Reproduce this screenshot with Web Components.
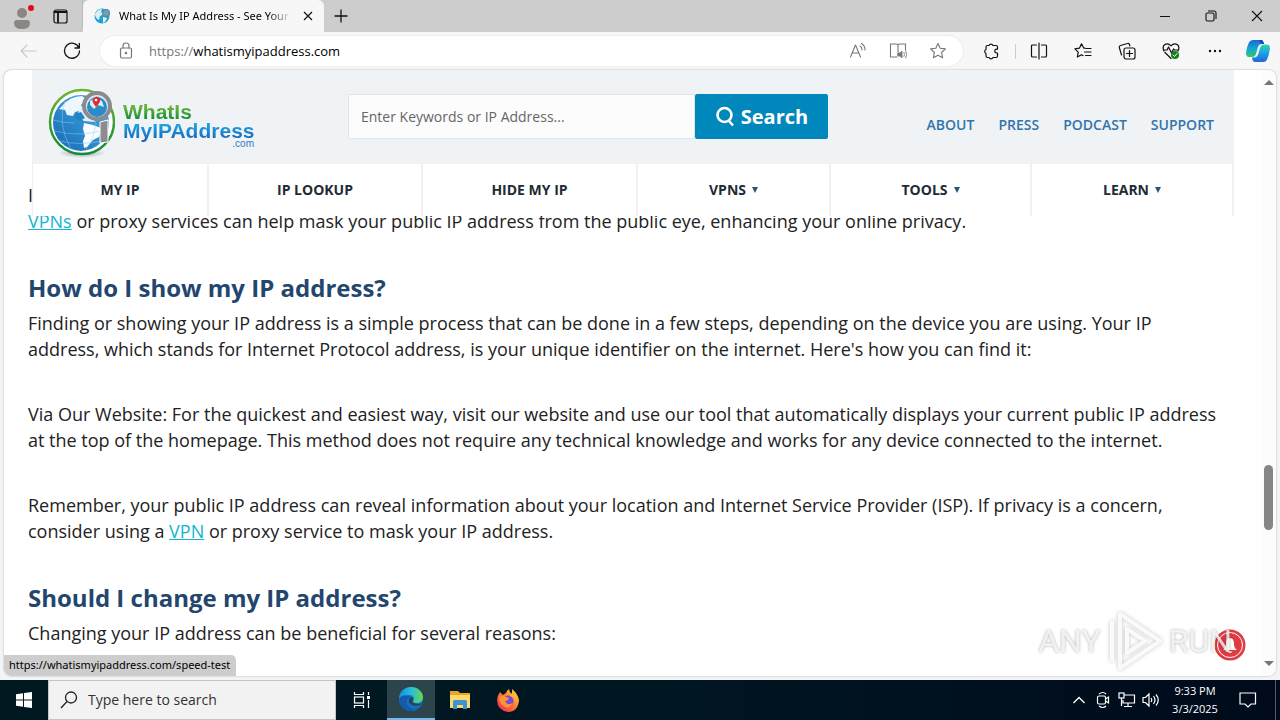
<!DOCTYPE html>
<html lang="en">
<head>
<meta charset="utf-8">
<title>What Is My IP Address - See Your Public Address</title>
<style>
html,body{margin:0;height:100%;overflow:hidden}
body{font-family:"Open Sans","Noto Sans",sans-serif;background:#f7f7f7;color:#222}
</style>
</head>
<body>
<desktop-screen>
  <tab-strip slot="tabs"><span>What Is My IP Address - See Your Public Address</span></tab-strip>
  <browser-toolbar slot="toolbar"></browser-toolbar>
  <page-view slot="page">
    <site-header slot="header">
      <nav-item slot="nav">MY IP</nav-item>
      <nav-item slot="nav">IP LOOKUP</nav-item>
      <nav-item slot="nav">HIDE MY IP</nav-item>
      <nav-item slot="nav" menu>VPNS</nav-item>
      <nav-item slot="nav" menu>TOOLS</nav-item>
      <nav-item slot="nav" menu>LEARN</nav-item>
    </site-header>
    <faq-article></faq-article>
  </page-view>
  <task-bar slot="taskbar"></task-bar>
</desktop-screen>

<script>
const define = (name, css, html, setup) => {
  const tpl = document.createElement('template');
  tpl.innerHTML = `<style>*{box-sizing:border-box}button{font:inherit;color:inherit;background:none;border:0;padding:0;margin:0}svg{display:block;flex:none}${css}</style>${html}`;
  customElements.define(name, class extends HTMLElement {
    connectedCallback() {
      if (this.shadowRoot) return;
      this.attachShadow({mode: 'open'}).append(tpl.content.cloneNode(true));
      if (setup) setup(this);
    }
  });
};

define('desktop-screen', `
:host{display:flex;flex-direction:column;height:100vh}
.page{flex:1;min-height:0;display:flex}
::slotted([slot=page]){flex:1;min-width:0}`,
`<slot name="tabs"></slot><slot name="toolbar"></slot><div class="page"><slot name="page"></slot></div><slot name="taskbar"></slot>`);

define('tab-strip', `
:host{display:flex;height:32px;background:#cdcdcd;color:#1b1b1b}
.left{display:flex;align-items:center;width:83px;padding-left:12px;gap:17px;border-right:1px solid #b9b9b9;border-radius:0 0 6px 0}
.tab{display:flex;align-items:center;width:241px;padding:0 8px 0 11px;background:#f7f7f7;border-radius:6px 6px 0 0}
.title{flex:1;min-width:0;margin:0 6px 0 9px;font:11px/16px "Noto Sans",sans-serif;white-space:nowrap;overflow:hidden;color:#000;-webkit-mask:linear-gradient(90deg,#000 85%,transparent 99%);mask:linear-gradient(90deg,#000 85%,transparent 99%)}
.new{width:34px;display:grid;place-items:center}
.win{margin-left:auto;display:flex}
.win button{width:46px;display:grid;place-items:center}`,
`<div class="left">
<button aria-label="Profile"><svg width="24" height="26" viewBox="0 0 24 26"><circle cx="10" cy="10" r="5" fill="#8c8683"/><path d="M2 20q0-3 3-3h10q3 0 3 3 0 6-8 6t-8-6Z" fill="#8c8683"/><circle cx="19" cy="5" r="3" fill="#e00b1c"/></svg></button>
<button aria-label="Tab actions"><svg width="15" height="15" fill="none" stroke="#111" stroke-width="1.2"><rect x="1" y="1" width="13" height="13" rx="2"/><path d="M1 3h13M5 4v10" stroke-width="1.8"/></svg></button></div>
<div class="tab"><svg width="16" height="16"><circle cx="8" cy="8" r="7.5" fill="#259ed2"/><path d="M1 6q3-5 7-5l-1 3 3 2-4 2-1 4Q1 10 1 6Z" fill="#d9eef6"/><path d="M9 9l4 1-2 4-2 1Z" fill="#e3f3f8"/><circle cx="12" cy="5" r="3.4" fill="#58a9cc" stroke="#75838c" stroke-width="1.3"/></svg><div class="title"><slot></slot></div>
<button aria-label="Close tab"><svg width="16" height="16"><path d="M4 4l8 8M12 4l-8 8" stroke="#111" stroke-width="1.2"/></svg></button></div>
<button class="new" aria-label="New tab"><svg width="14" height="14"><path d="M7 .5v13M.5 7h13" stroke="#111" stroke-width="1.3"/></svg></button>
<div class="win"><button aria-label="Minimize"><svg width="12" height="12"><path d="M1 6.5h10" stroke="#111"/></svg></button>
<button aria-label="Restore"><svg width="12" height="12" fill="none" stroke="#111" stroke-width="1.1"><rect x="1" y="3" width="8" height="8" rx="1.5"/><path d="M3 1h6q2 0 2 2v6"/></svg></button>
<button aria-label="Close"><svg width="12" height="12"><path d="M1 1l10 10M11 1L1 11" stroke="#111" stroke-width="1.1"/></svg></button></div>`);

define('browser-toolbar', `
:host{display:flex;align-items:center;height:38px;background:#f7f7f7;color:#111}
button{display:grid;place-items:center;width:44px;height:30px}
.back{margin-left:6px}
.address{flex:1;display:flex;align-items:center;height:30px;margin-left:6px;padding:0 5px 0 16px;border-radius:15px;background:#fff;box-shadow:0 0 2px #0002}
.address button{width:40px;color:#777}
.url{flex:1;margin-left:13px;font-size:13px;line-height:20px;white-space:nowrap;color:#000}
.url i{font-style:normal;color:#777}
.sep{width:1px;height:15px;margin:0 1px 0 2px;background:#ccc}
.tools{display:flex;align-items:center;padding-left:6px}
.tools .copilot{width:36px;margin-right:4px;margin-left:3px}
svg{fill:none;stroke:currentColor;stroke-width:1.2;stroke-linejoin:round;stroke-linecap:round}`,
`<button class="back" aria-label="Back"><svg width="18" height="16" style="color:#c9c9c9"><path d="M17 8H2M8 2L2 8l6 6"/></svg></button>
<button aria-label="Refresh"><svg width="18" height="18"><path d="M16 6A7.5 7.500 0 1 0 16.500 9M16.300 1.500V6H12" stroke-width="1.3"/></svg></button>
<div class="address"><svg width="20" height="18" style="color:#777"><rect x="4.500" y="6" width="11" height="10" rx="1.500"/><path d="M7 6V4q0-3 3-3t3 3v2"/><circle cx="10" cy="11" r=".6" fill="#777"/></svg>
<div class="url" role="textbox" aria-label="Address"><i>https://</i>whatismyipaddress.com</div>
<button aria-label="Read aloud"><svg width="18" height="18"><path d="M1.500 15L6.500 3l5 12M3.200 11h6.600M11 4q2 1 2 4M12.500 1.500Q16 3.500 16 8" stroke-width="1.1"/></svg></button>
<button aria-label="Immersive reader"><svg width="18" height="18"><path d="M8 15H1.500V2H7q1.500 0 2 1 .5-1 2-1h5.500v6M9 3v7" stroke-width="1.1"/><path d="M9 11h2l2-2v7l-2-2H9Z" fill="currentColor" stroke-width=".8"/><path d="M15 10.500q1 2 0 4M16.800 9q2 3.500 0 7" stroke-width=".9"/></svg></button>
<button aria-label="Add to favorites"><svg width="18" height="18"><path d="M9 1.500l2.200 4.700 5.200.7-3.800 3.600 1 5.200L9 13.200l-4.600 2.500 1-5.200L1.600 6.900l5.200-.7Z" stroke-width="1.1"/></svg></button></div>
<div class="tools"><button aria-label="Extensions"><svg width="18" height="18"><path d="M5.500 3.500H7a2.200 2.200 0 0 1 4 0h3q1.500 0 1.500 1.500v2.200h-.8a1.900 1.900 0 0 0 0 3.800h.8V14q0 1.500-1.500 1.500h-3a2.200 2.200 0 0 1-4 0H5.500Q4 15.500 4 14v-2.500a2.200 2.200 0 0 1 0-4V5q0-1.500 1.500-1.500Z"/></svg></button><span class="sep"></span>
<button aria-label="Split screen"><svg width="18" height="18"><path d="M6.500 3h-4q-1 0-1 1v10q0 1 1 1h4M11.500 3h4q1 0 1 1v10q0 1-1 1h-4M9 1v16"/></svg></button>
<button aria-label="Favorites"><svg width="18" height="18"><path d="M11 6.200l-1.300-.1L7.500 1.800 5.400 6.200.9 6.900l3.300 3.300-.8 4.800 4-2.200 1.600.8M12 6.500h5M10.500 10H17M11.500 13.500H17"/></svg></button>
<button aria-label="Collections"><svg width="18" height="18"><rect x="6" y="6" width="11" height="11" rx="2"/><path d="M11.500 8.500v6M8.500 11.500h6M3.500 13L1.300 5.500Q1 4 2.500 3.500l7-2q1.500-.5 2 1l.3 1.300"/></svg></button>
<button aria-label="Browser essentials"><svg width="18" height="18"><path d="M2 9Q0 5 2.500 2.800 6 .5 9 3.800q3-3.300 6.500-1Q18 5 16 9M1.500 8H5l1.500-3 3 6 2-4 1 1h4M3 10.500l6 6"/><circle cx="13" cy="13" r="4" fill="#16811a" stroke="none"/><path d="M11 13l1.500 1.500 2.500-3" stroke="#fff" stroke-width="1"/></svg></button>
<button aria-label="More"><svg width="16" height="4"><g fill="#111" stroke="none"><circle cx="3" cy="2" r="1.200"/><circle cx="8" cy="2" r="1.200"/><circle cx="13" cy="2" r="1.200"/></g></svg></button>
<button class="copilot" aria-label="Copilot"><svg width="24" height="24" style="stroke:none"><defs><linearGradient id="a" x2="0" y2="1"><stop stop-color="#1a68d8"/><stop offset=".5" stop-color="#14a6d4"/><stop offset="1" stop-color="#31c96b"/></linearGradient><linearGradient id="b" x2="0" y2="1"><stop stop-color="#35d5aa"/><stop offset=".5" stop-color="#1aa2e8"/><stop offset="1" stop-color="#2465d9"/></linearGradient></defs><path d="M7 1h8q2 0 2.500 2l.5 2h-2q-3 0-4 3l-2 7q-1 3-4 3H3q-3 0-3-4Q1 7 3 3.500 4 1 7 1Z" fill="url(#a)"/><path d="M17 23H9q-2 0-2.500-2L6 18.500h2q3 0 4-3L14 9q1-3.500 4-3.500h3q3 0 3 4-1 7-3 11-1 2.500-4 2.500Z" fill="url(#b)"/><path d="M13 1h2q2 0 3 4h-2q-2-1-3-4Z" fill="#1446b8"/></svg></button></div>`);

define('page-view', `
:host{display:flex;padding:0 4px 4px;background:#f3f4f6}
.frame{position:relative;flex:1;min-width:0;display:flex;background:#fff;border-radius:8px;overflow:hidden;box-shadow:0 0 2px #0005}
.content{position:relative;flex:1;min-width:0;overflow:hidden}
.over{position:absolute;top:0;left:28px;right:27px}
.scroll{display:flex;flex-direction:column;align-items:center;width:15px;padding:10px 0;background:#fcfcfc}
.track{flex:1;width:9px;display:flex;flex-direction:column;padding:6px 0}
.track b{width:9px;height:65px;border-radius:5px;background:#858585}
.track:before{content:"";flex:376}.track:after{content:"";flex:126}
.status{position:absolute;left:0;bottom:0;height:21px;padding:0 6px 0 5px;background:#cdcdcd;color:#000;border-radius:0 5px 0 0;font:11px/20px "Noto Sans",sans-serif}
.bell{position:absolute;right:30px;bottom:15px;width:32px;height:32px}
.mark{position:absolute;right:44px;bottom:3px;display:flex;align-items:center;height:64px;gap:5px;color:#fffc;font:32px/64px Roboto,sans-serif;text-shadow:0 0 3px #0005;pointer-events:none}
.mark svg{filter:drop-shadow(0 0 2px #0004)}`,
`<div class="frame"><div class="content"><slot></slot><div class="over"><slot name="header"></slot></div></div>
<div class="scroll"><svg width="10" height="5"><path d="M5 0l5 5H0Z" fill="#777"/></svg><div class="track"><b></b></div><svg width="10" height="5"><path d="M5 5l5-5H0Z" fill="#777"/></svg></div>
<div class="status">https://whatismyipaddress.com/speed-test</div>
<button class="bell" aria-label="Notifications"><svg width="32" height="32"><circle cx="16" cy="16" r="15.500" fill="#df3b43"/><circle cx="16" cy="16" r="12.500" fill="none" stroke="#fff"/><path d="M9 21q3-2 3-6 0-6 4-6t4 6q0 4 3 6ZM13.500 22.500h5q-2.500 3-5 0Z" fill="#fff"/></svg></button>
<div class="mark"><span>ANY</span><svg width="58" height="64" fill="none" stroke="#fff" stroke-opacity=".85" stroke-linejoin="round"><path d="M14 5l40 27-40 27Z" stroke-width="4"/><path d="M21 20l18 12-18 12Z" stroke-width="4"/><path d="M6 12v40" stroke-width="4"/></svg><span>RUN</span></div></div>`);

define('site-header', `
:host{display:block}
.top{display:flex;height:94px;background:#eff3f6;padding:0 20px 0 16px}
.logo{display:flex;text-decoration:none;width:300px;padding-top:18px;font-family:"Liberation Sans",sans-serif;font-weight:700}
.name{display:flex;flex-direction:column;width:131px;margin-left:8px;padding-top:15px}
.name span{font-size:21px;line-height:18px;color:#43a53b;background:linear-gradient(#66b538 20%,#1b8d3c 90%);-webkit-background-clip:text;background-clip:text;-webkit-text-fill-color:transparent}
.name span+span{line-height:20px;padding-bottom:2px;background-image:linear-gradient(#1d9fe0 20%,#1d62b5 90%)}
.name small{align-self:flex-end;font-size:10px;line-height:10px;margin-top:-4px;font-weight:400;color:#2a7fc6}
form{display:flex;height:45px;margin-top:24px;width:480px}
input{flex:1;min-width:0;height:45px;padding:0 12px;border:1px solid #e0e5e9;background:#fcfcfc;font:14px/20px "Open Sans",sans-serif;border-radius:2px 0 0 2px}
input::placeholder{color:#666;opacity:1}
form button{display:flex;align-items:center;justify-content:center;gap:6px;width:133px;border-radius:2px;background:#0088bd;color:#fff;font-weight:700;font-size:20px}
.links{display:flex;gap:24px;margin-left:auto;padding-top:45px;font-size:14px;line-height:20px}
.links a{color:#3374aa;text-decoration:none;font-weight:600}
nav{display:grid;grid-template-columns:176fr 214fr 215fr 193fr 201fr 202fr;height:52px;background:#fff;border-left:1px solid #efefef}`,
`<header><div class="top"><a class="logo" href="#" aria-label="WhatIsMyIPAddress.com home">
<svg width="67" height="70" viewBox="0 0 67 70"><defs><linearGradient id="r" x2="0" y2="1"><stop stop-color="#6fb62c"/><stop offset="1" stop-color="#118a3a"/></linearGradient><linearGradient id="g" x1="1" x2="0" y2="1"><stop stop-color="#49b4e6"/><stop offset="1" stop-color="#1668b5"/></linearGradient><radialGradient id="s"><stop stop-color="#0005"/><stop offset="1" stop-color="#0000"/></radialGradient></defs>
<ellipse cx="34" cy="65" rx="24" ry="5" fill="url(#s)"/><circle cx="34" cy="34" r="32" fill="#fff" stroke="url(#r)" stroke-width="2.500"/><circle cx="33" cy="35" r="28" fill="url(#g)"/>
<path d="M14 18Q22 8 34 8l4 3-5 6 2 5-8 2-2 4-6-1-2-5-6-1Z" fill="#eef7fb"/><path d="M36 35l9 2 8 3-2 9-6 3-6 7-3 1-1-7 2-5-2-7Z" fill="#fafdff"/><path d="M33 18l8 4 6 12-11-1-7-5Z" fill="#e2f0f8"/><path d="M27 26l6-2 4 6-5 3-5-3Z" fill="#2284c6"/><g fill="none" stroke="#90cae9" stroke-width=".5"><path d="M6 43q27 7 53-2M12 53q20 5 42 0M17 12q-8 25 6 49M43 11q12 26-5 51M5 32q10 3 22 3"/></g>
<path d="M52 34l8-2v22l-8 1Z" fill="#8e8b8c" stroke="#fff"/><circle cx="49" cy="18" r="13" fill="#d6e9f4" stroke="#8b8b8e" stroke-width="4"/><circle cx="49" cy="19" r="10" fill="#2a8bc6"/><path d="M42 13q5-4 12 0l2 6-6-2-4 4-4-4Z" fill="#dceef8"/><path d="M48 19q-5-6-3-8 4-5 7 0 1 3-4 8Z" fill="#dc2e32"/><circle cx="48" cy="12" r="1.300" fill="#fff"/></svg>
<div class="name"><span>WhatIs</span><span>MyIPAddress</span><small>.com</small></div></a>
<form onsubmit="return false"><input type="text" aria-label="Enter Keywords or IP Address" placeholder="Enter Keywords or IP Address..."><button type="submit"><svg width="20" height="22" fill="none" stroke="#fff" stroke-width="2.600"><circle cx="9.500" cy="9" r="7"/><path d="M13.500 14.500l4.500 5"/></svg>Search</button></form>
<div class="links"><a href="#">ABOUT</a><a href="#">PRESS</a><a href="#">PODCAST</a><a href="#">SUPPORT</a></div></div>
<nav><slot name="nav"></slot></nav></header>`);

define('nav-item', `
:host{display:flex;justify-content:center;border-right:2px solid #f1f1f2}
a{display:flex;align-items:center;gap:6px;color:#212b36;text-decoration:none;font-size:14px;font-weight:700;line-height:20px}
svg{display:none}
:host([menu]) svg{display:block}`,
`<a href="#"><span><slot></slot></span><svg width="6" height="6"><path d="M0 0h6L3 6Z" fill="#285575"/></svg></a>`);

define('faq-article', `
:host{display:block;padding:112px 36px 0 24px;font-size:18px;line-height:26px;color:#222}
p{margin:0 0 39px}
h2{margin:0 0 5px;color:#23466e;font-size:24px;line-height:34px;font-weight:700}
section{margin-bottom:37px}
section p:last-child{margin:0}
a{color:#10b5d0;text-decoration:underline}`,
`<article>
<section><p>I<br><a href="#">VPNs</a> or proxy services can help mask your public IP address from the public eye, enhancing your online privacy.</p></section>
<section><h2>How do I show my IP address?</h2>
<p>Finding or showing your IP address is a simple process that can be done in a few steps, depending on the device you are using. Your IP address, which stands for Internet Protocol address, is your unique identifier on the internet. Here's how you can find it:</p>
<p>Via Our Website: For the quickest and easiest way, visit our website and use our tool that automatically displays your current public IP address at the top of the homepage. This method does not require any technical knowledge and works for any device connected to the internet.</p>
<p>Remember, your public IP address can reveal information about your location and Internet Service Provider (ISP). If privacy is a concern, consider using a <a href="#">VPN</a> or proxy service to mask your IP address.</p></section>
<section><h2>Should I change my IP address?</h2><p>Changing your IP address can be beneficial for several reasons:</p></section>
</article>`);

define('task-bar', `
:host{display:flex;height:40px;background:linear-gradient(90deg,#001820,#001722 50%,#000a1a);color:#fff}
button{width:48px;height:40px;display:grid;place-items:center}
label{display:flex;align-items:center;gap:10px;width:288px;padding:0 11px;background:#f2f2f2;border:1px solid #c3c6c8;color:#222}
input{flex:1;min-width:0;border:0;background:none;padding:0;font:14px/20px "Open Sans",sans-serif}
input::placeholder{color:#333;opacity:1}
.view{width:51px}
.on{background:#2c444c;border-bottom:2px solid #76b9ed;margin-right:1px}
.tray{display:flex;align-items:center;margin-left:auto}
.tray button{width:24px}
.clock{width:64px;text-align:center;font-size:11px;line-height:18px;white-space:nowrap}
.tray .note{width:41px}
.end{align-self:stretch;width:5px;margin-left:7px;border-left:1px solid #515b67}`,
`<button aria-label="Start"><svg width="16" height="16" fill="#fff"><path d="M0 2.200L7 1.200V7.500H0ZM8 1.100L16 0V7.500H8ZM0 8.500H7V14.800L0 13.800ZM8 8.500H16V16L8 14.900Z"/></svg></button>
<label><svg width="18" height="18" fill="none" stroke="#222" stroke-width="1.300"><circle cx="11" cy="6.500" r="5.500"/><path d="M7 10.500L1 17"/></svg><input type="text" placeholder="Type here to search" aria-label="Type here to search"></label>
<button class="view" aria-label="Task view"><svg width="18" height="16" fill="none" stroke="#fff" stroke-width="1.200"><path d="M1.500 0v2.500h9V0M1.500 16v-2.500h9V16M15.500 0v3M15.500 8v8"/><rect x="1.500" y="5" width="9" height="6"/><path d="M14 5.500h3" stroke-width="3"/></svg></button>
<button class="on" aria-label="Microsoft Edge"><svg width="24" height="24"><defs><linearGradient id="e" x2="1"><stop stop-color="#168de0"/><stop offset=".5" stop-color="#27bedb"/><stop offset="1" stop-color="#67d84b"/></linearGradient></defs><circle cx="12" cy="12" r="12" fill="#1471c9"/><path d="M.1 12C0 5 5 0 12 0s12 5 12 10c0 4-3 6-6.500 6-3 0-4.500-1.500-3-3 1-2 0-5-4-5C5 8 1 9 .1 12Z" fill="url(#e)"/><path d="M8 12q-2 6 4 9 5 2 9-2-5 5-11 5Q1 22 0 12 4 7 9 9q2 0 4 3-2-2-5 0Z" fill="#135bab"/><path d="M10 12q-1 5 4 6.500 4 1 8-1l1-1.500q-3 1.500-7 .5-4-1-1.500-4Q14 9 10 12Z" fill="#2c444c"/></svg></button>
<button aria-label="File Explorer"><svg width="22" height="20"><path d="M1 1h8l2 2h10v15H1Z" fill="#e3a52c"/><path d="M1 5h20v13H1Z" fill="#ffd86b"/><path d="M4 19v-7q0-2 2-2h10q2 0 2 2v7h-4v-4H8v4Z" fill="#3994d4"/></svg></button>
<button aria-label="Firefox"><svg width="24" height="24"><defs><linearGradient id="f" x1="1" x2="0" y2="1"><stop stop-color="#ffe43f"/><stop offset=".5" stop-color="#ff7630"/><stop offset="1" stop-color="#ee176a"/></linearGradient></defs><path d="M4 4l3 3 3-2q1-3 3-4 0 3 3 5V1q6 5 7 11-1 12-11 12Q1 22 1 12q0-4 3-8Z" fill="url(#f)"/><circle cx="12" cy="13" r="5.500" fill="#794ad2"/><path d="M3 9q4-3 7 0l3 1q-1 3-4 3 2 5 8 2-4 7-10 3-4-3-4-9Z" fill="#ff9435"/><path d="M14 8q4 1 5 5 2-6-3-8Z" fill="#ffb631"/></svg></button>
<div class="tray"><button aria-label="Show hidden icons"><svg width="12" height="8" fill="none" stroke="#fff" stroke-width="1.300"><path d="M.5 7L6 1.500 11.500 7"/></svg></button>
<button aria-label="Meet now"><svg width="14" height="18" fill="none" stroke="#fff" stroke-width="1.200"><rect x="1.500" y="5" width="8" height="8" rx="1.500"/><path d="M9.500 8l3-2v6l-3-2M3 3q4-3 7 0M3 15q4 3 7 0"/></svg></button>
<button aria-label="Network"><svg width="18" height="16" fill="none" stroke="#fff" stroke-width="1.200"><path d="M6 3h10.500v8H5V8M10 11v3M6 14.500h8M3.500 6v8"/><rect x="1" y="1" width="5" height="5"/></svg></button>
<button aria-label="Volume"><svg width="18" height="16" fill="none" stroke="#fff" stroke-width="1.200"><path d="M1 5.500h2.500L7 2v12L3.500 10.500H1ZM9 6q1.500 2 0 4M11.500 4q3 4 0 8M14 2.500q4.500 5.500 0 11"/></svg></button>
<div class="clock">9:33 PM<br>3/3/2025</div>
<button class="note" aria-label="Action center"><svg width="18" height="18" fill="none" stroke="#fff" stroke-width="1.200"><path d="M1 2h15.500v11H12l-3 3-3-3H1Z"/></svg></button><span class="end"></span></div>`);
</script>
</body>
</html>
